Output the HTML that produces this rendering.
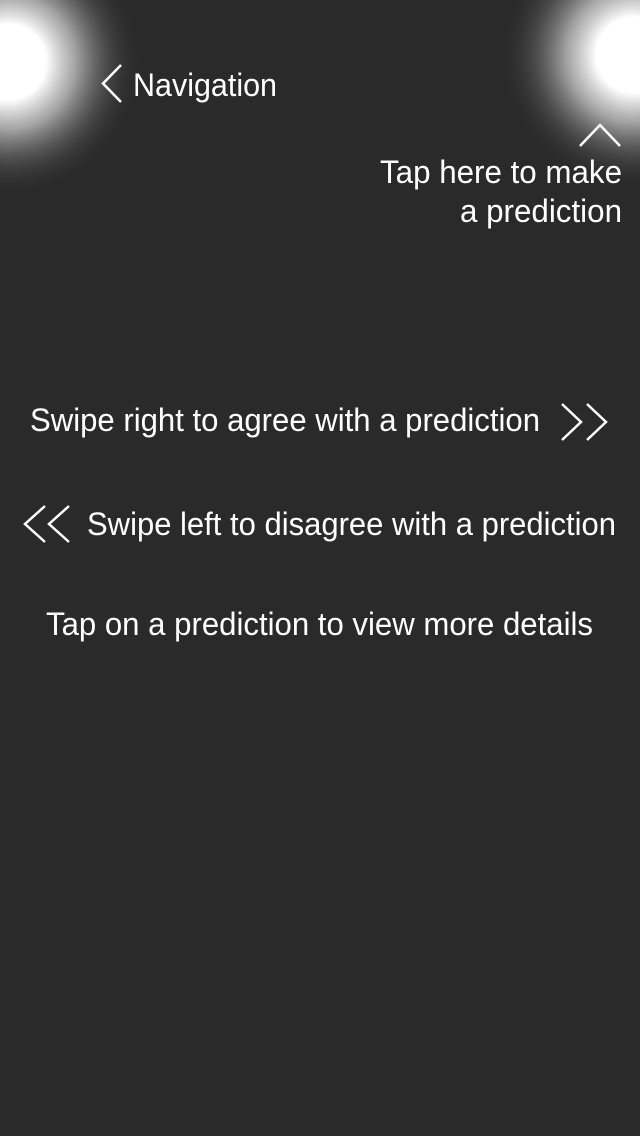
<!DOCTYPE html>
<html><head><meta charset="utf-8"><style>
html,body{margin:0;padding:0;background:#2a2a2a;width:640px;height:1136px;overflow:hidden}
svg{display:block}
text{font-family:"Liberation Sans",sans-serif;font-size:32px;fill:#fff}
</style></head><body>
<svg width="640" height="1136" viewBox="0 0 640 1136">
<defs>
<radialGradient id="g" cx="0.5" cy="0.5" r="0.5">
<stop offset="0" stop-color="#fff"/>
<stop offset="0.28" stop-color="#fff"/>
<stop offset="0.5" stop-color="#ccc" stop-opacity="0.75"/>
<stop offset="0.75" stop-color="#888" stop-opacity="0.3"/>
<stop offset="1" stop-color="#2a2a2a" stop-opacity="0"/>
</radialGradient>
</defs>
<rect width="640" height="1136" fill="#2a2a2a"/>
<circle cx="8" cy="62" r="135" fill="url(#g)"/>
<circle cx="634" cy="55" r="135" fill="url(#g)"/>
<g fill="none" stroke="#fff" stroke-width="2.5">
<polyline points="121,65 103,83.5 121,102"/>
<polyline points="580,146 600,125 620,146"/>
<polyline points="562,404 581,422 562,440"/>
<polyline points="587,404 606,422 587,440"/>
<polyline points="45,506 25,524 45,542"/>
<polyline points="69,506 49,524 69,542"/>
</g>
<text x="133" y="96" textLength="144" lengthAdjust="spacingAndGlyphs">Navigation</text>
<text x="380" y="183" textLength="242" lengthAdjust="spacingAndGlyphs">Tap here to make</text>
<text x="460" y="222" textLength="162" lengthAdjust="spacingAndGlyphs">a prediction</text>
<text x="30" y="431" textLength="510" lengthAdjust="spacingAndGlyphs">Swipe right to agree with a prediction</text>
<text x="87" y="535" textLength="529" lengthAdjust="spacingAndGlyphs">Swipe left to disagree with a prediction</text>
<text x="46" y="635" textLength="547" lengthAdjust="spacingAndGlyphs">Tap on a prediction to view more details</text>
</svg>
</body></html>
